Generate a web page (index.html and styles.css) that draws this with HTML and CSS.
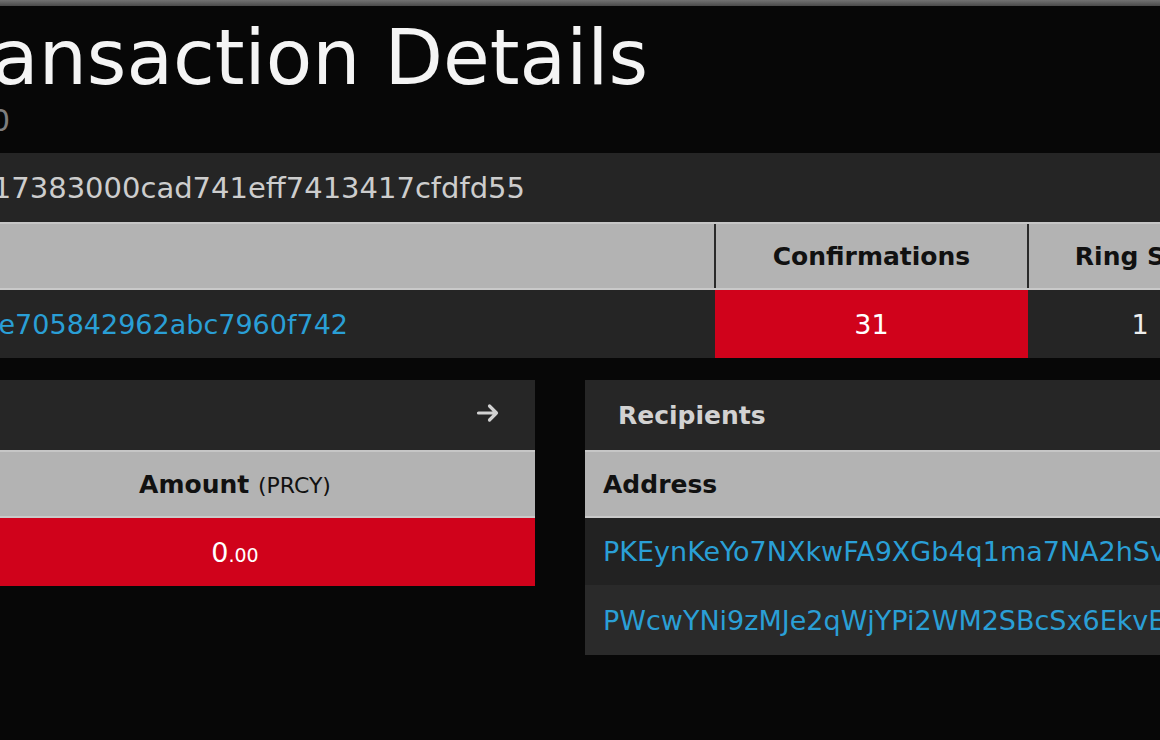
FILE: index.html
```html
<!DOCTYPE html>
<html>
	<head>
		<meta charset="UTF-8">
		<title>Transaction Details</title>
		<link rel="stylesheet" href="styles.css">
	</head>
	<body>
		<div class="topbar"></div>
		<div class="page">
			<div class="heading">
				<h1 class="title"><span>Transaction Details</span></h1>
				<p class="subtitle"><span>Block #245710</span></p>
			</div>

			<div class="hashbar">
				<div class="clip-end hash-box"><span>5c1f9a0e3b7d24c68e0f1a95b3d7c2e4a17383000cad741eff7413417cfdfd55</span></div>
			</div>

			<table class="tx-table">
				<colgroup>
					<col class="col-block">
					<col class="col-conf">
					<col class="col-ring">
					<col class="col-fee">
				</colgroup>
				<tr>
					<th></th>
					<th>Confirmations</th>
					<th>Ring Size</th>
					<th>Fee</th>
				</tr>
				<tr>
					<td class="left"><div class="clip-end block-box"><a href="javascript:;">b8e24f0a9c13d57e6f2a80c4d9b1e35f7a0c2d6e705842962abc7960f742</a></div></td>
					<td class="red">31</td>
					<td class="num">1</td>
					<td class="num">0.01</td>
				</tr>
			</table>

			<div class="panels">
				<div class="panel panel-in">
					<div class="panel-head">
						<svg class="arrow" width="24" height="20" viewBox="0 0 24 20">
							<path d="M2.5 10H20.5M13.5 3L20.5 10L13.5 17" fill="none" stroke="#d2d2d2" stroke-width="3.2" stroke-linecap="round" stroke-linejoin="round"/>
						</svg>
					</div>
					<table class="io-table">
						<tr><th class="center">Amount <small>(PRCY)</small></th></tr>
						<tr><td class="center red">0<small>.00</small></td></tr>
					</table>
				</div>

				<div class="panel panel-out">
					<div class="panel-head"><h3>Recipients</h3></div>
					<table class="io-table">
						<tr><th>Address</th></tr>
						<tr class="odd"><td><a href="javascript:;">PKEynKeYo7NXkwFA9XGb4q1ma7NA2hSvQ8rT3cLm5uWd1kHf</a></td></tr>
						<tr class="even"><td><a href="javascript:;">PWcwYNi9zMJe2qWjYPi2WM2SBcSx6EkvEJb7nR4aUy8tGp3o</a></td></tr>
					</table>
				</div>
			</div>
		</div>
	</body>
</html>
```

FILE: styles.css
```css
html,body{
	margin: 0;
	padding: 0;
}
body{
	background: #070707;
	overflow: hidden;
	font-family: "DejaVu Sans", "Liberation Sans", sans-serif;
	color: #e6e6e6;
	height: 740px;
}
a{
	text-decoration: none;
	color: #2a9fd6;
}
table{
	border-collapse: collapse;
	border-spacing: 0;
}
.topbar{
	height: 6px;
	background: linear-gradient(#727272, #4a4a4a);
}
.page{
	margin-left: -65px;
	width: 1460px;
}

/* heading */
.heading{
	height: 147px;
	overflow: hidden;
}
.clip-end{
	display: flex;
	justify-content: flex-end;
	white-space: nowrap;
}
.title{
	display: flex;
	justify-content: flex-end;
	white-space: nowrap;
	width: 713px;
	margin: 0;
	padding-top: 10px;
	font-size: 76px;
	font-weight: normal;
	line-height: 84px;
	color: #f4f4f4;
}
.subtitle{
	display: flex;
	justify-content: flex-end;
	white-space: nowrap;
	width: 75px;
	margin: 4px 0 0;
	font-size: 30px;
	line-height: 34px;
	color: #7e7e7e;
}

/* hash */
.hashbar{
	height: 69px;
	background: #252525;
	display: flex;
	align-items: center;
	font-size: 29px;
	color: #cdcdcd;
}
.hash-box{
	width: 590px;
}

/* top table */
.tx-table{
	table-layout: fixed;
	width: 1517px;
}
.col-block{
	width: 780px;
}
.col-conf{
	width: 313px;
}
.col-ring{
	width: 224px;
}
.col-fee{
	width: 200px;
}
.tx-table th,.io-table th{
	height: 64px;
	background: #b3b3b3;
	color: #111;
	font-size: 25px;
	font-weight: bold;
	border-top: 2px solid #c6c6c6;
	border-bottom: 2px solid #c9c9c9;
	padding: 0 17px;
	white-space: nowrap;
}
.tx-table th + th{
	border-left: 2px solid #2a2a2a;
}
.tx-table td{
	height: 68px;
	background: #252525;
	font-size: 27px;
	padding: 0;
	text-align: center;
	white-space: nowrap;
}
.tx-table .left{
	text-align: left;
}
.block-box{
	width: 413px;
}
.red{
	background: #d0021b !important;
	color: #fff;
}
.num{
	color: #eeeeee;
}

/* lower panels */
.panels{
	display: flex;
	gap: 50px;
	margin-top: 22px;
	align-items: flex-start;
}
.panel-in{
	flex: none;
	width: 600px;
}
.panel-out{
	flex: 1;
	min-width: 0;
	overflow: hidden;
}
.panel-head{
	height: 70px;
	background: #262626;
	display: flex;
	align-items: center;
	justify-content: flex-end;
	padding: 0 35px;
}
.arrow{
	margin-top: -5px;
}
.panel-out .panel-head{
	justify-content: flex-start;
	padding: 0 33px;
}
.panel-head h3{
	margin: 0;
	font-size: 25px;
	color: #d2d2d2;
}
.io-table{
	width: 100%;
}
.io-table th{
	text-align: left;
	padding: 0 18px;
}
.io-table td{
	height: 68px;
	font-size: 27px;
	padding: 0 18px;
	white-space: nowrap;
}
.io-table .center{
	text-align: center;
}
.io-table th small{
	font-size: 22px;
	font-weight: normal;
}
.io-table td small{
	font-size: 19px;
}
.io-table .odd td{
	background: #222222;
	height: 67px;
}
.io-table .even td{
	background: #2a2a2a;
	height: 70px;
}
```
